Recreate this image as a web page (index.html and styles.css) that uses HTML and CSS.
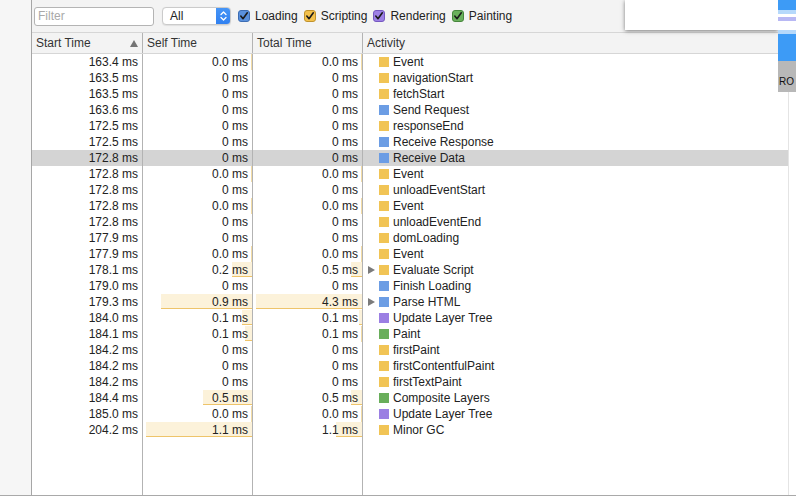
FILE: index.html
```html
<!DOCTYPE html>
<html>
<head>
<meta charset="utf-8">
<title>Timeline</title>
<link rel="stylesheet" href="styles.css">
</head>
<body>
<div class="app">
  <div class="gutter"></div>
  <div class="main">
    <div class="toolbar">
      <div class="filter">Filter</div>
      <div class="select">
        <span class="select-label">All</span>
        <span class="stepper"><svg width="15" height="18" viewBox="0 0 15 18"><path d="M5 7.5 L7.5 5 L10 7.5" fill="none" stroke="#fff" stroke-width="1.3" stroke-linecap="round" stroke-linejoin="round"/><path d="M5 10.5 L7.5 13 L10 10.5" fill="none" stroke="#fff" stroke-width="1.3" stroke-linecap="round" stroke-linejoin="round"/></svg></span>
      </div>
      <label class="cb cb-loading"><svg class="box" width="12" height="12" viewBox="0 0 12 12"><rect class="box-bg" x="0.5" y="0.5" width="11" height="11" rx="2.5"/><path d="M2.8 6.1 L5 8.7 L9.3 2.8" fill="none" stroke="#1b1b1b" stroke-width="1.6" stroke-linecap="round" stroke-linejoin="round"/></svg><span>Loading</span></label>
      <label class="cb cb-scripting"><svg class="box" width="12" height="12" viewBox="0 0 12 12"><rect class="box-bg" x="0.5" y="0.5" width="11" height="11" rx="2.5"/><path d="M2.8 6.1 L5 8.7 L9.3 2.8" fill="none" stroke="#1b1b1b" stroke-width="1.6" stroke-linecap="round" stroke-linejoin="round"/></svg><span>Scripting</span></label>
      <label class="cb cb-rendering"><svg class="box" width="12" height="12" viewBox="0 0 12 12"><rect class="box-bg" x="0.5" y="0.5" width="11" height="11" rx="2.5"/><path d="M2.8 6.1 L5 8.7 L9.3 2.8" fill="none" stroke="#1b1b1b" stroke-width="1.6" stroke-linecap="round" stroke-linejoin="round"/></svg><span>Rendering</span></label>
      <label class="cb cb-painting"><svg class="box" width="12" height="12" viewBox="0 0 12 12"><rect class="box-bg" x="0.5" y="0.5" width="11" height="11" rx="2.5"/><path d="M2.8 6.1 L5 8.7 L9.3 2.8" fill="none" stroke="#1b1b1b" stroke-width="1.6" stroke-linecap="round" stroke-linejoin="round"/></svg><span>Painting</span></label>
    </div>
    <div class="table">
      <div class="row head">
        <div class="cell sortable"><span>Start Time</span><svg class="sort" width="8" height="7" viewBox="0 0 8 7"><polygon points="4,0 8,7 0,7" fill="#747474"/></svg></div>
        <div class="cell">Self Time</div>
        <div class="cell">Total Time</div>
        <div class="cell act">Activity</div>
      </div>

      <div class="row"><div class="cell num">163.4 ms</div><div class="cell num"><i class="bar tiny"></i><span class="val">0.0 ms</span></div><div class="cell num"><i class="bar tiny"></i><span class="val">0.0 ms</span></div><div class="cell act"><span class="tri-space"></span><span class="sq yellow"></span>Event</div></div>
      <div class="row"><div class="cell num">163.5 ms</div><div class="cell num">0 ms</div><div class="cell num">0 ms</div><div class="cell act"><span class="tri-space"></span><span class="sq yellow"></span>navigationStart</div></div>
      <div class="row"><div class="cell num">163.5 ms</div><div class="cell num">0 ms</div><div class="cell num">0 ms</div><div class="cell act"><span class="tri-space"></span><span class="sq yellow"></span>fetchStart</div></div>
      <div class="row"><div class="cell num">163.6 ms</div><div class="cell num">0 ms</div><div class="cell num">0 ms</div><div class="cell act"><span class="tri-space"></span><span class="sq blue"></span>Send Request</div></div>
      <div class="row"><div class="cell num">172.5 ms</div><div class="cell num">0 ms</div><div class="cell num">0 ms</div><div class="cell act"><span class="tri-space"></span><span class="sq yellow"></span>responseEnd</div></div>
      <div class="row"><div class="cell num">172.5 ms</div><div class="cell num">0 ms</div><div class="cell num">0 ms</div><div class="cell act"><span class="tri-space"></span><span class="sq blue"></span>Receive Response</div></div>
      <div class="row sel"><div class="cell num">172.8 ms</div><div class="cell num">0 ms</div><div class="cell num">0 ms</div><div class="cell act"><span class="tri-space"></span><span class="sq blue"></span>Receive Data</div></div>
      <div class="row"><div class="cell num">172.8 ms</div><div class="cell num"><i class="bar tiny"></i><span class="val">0.0 ms</span></div><div class="cell num"><i class="bar tiny"></i><span class="val">0.0 ms</span></div><div class="cell act"><span class="tri-space"></span><span class="sq yellow"></span>Event</div></div>
      <div class="row"><div class="cell num">172.8 ms</div><div class="cell num">0 ms</div><div class="cell num">0 ms</div><div class="cell act"><span class="tri-space"></span><span class="sq yellow"></span>unloadEventStart</div></div>
      <div class="row"><div class="cell num">172.8 ms</div><div class="cell num"><i class="bar tiny"></i><span class="val">0.0 ms</span></div><div class="cell num"><i class="bar tiny"></i><span class="val">0.0 ms</span></div><div class="cell act"><span class="tri-space"></span><span class="sq yellow"></span>Event</div></div>
      <div class="row"><div class="cell num">172.8 ms</div><div class="cell num">0 ms</div><div class="cell num">0 ms</div><div class="cell act"><span class="tri-space"></span><span class="sq yellow"></span>unloadEventEnd</div></div>
      <div class="row"><div class="cell num">177.9 ms</div><div class="cell num">0 ms</div><div class="cell num">0 ms</div><div class="cell act"><span class="tri-space"></span><span class="sq yellow"></span>domLoading</div></div>
      <div class="row"><div class="cell num">177.9 ms</div><div class="cell num"><i class="bar tiny"></i><span class="val">0.0 ms</span></div><div class="cell num"><i class="bar tiny"></i><span class="val">0.0 ms</span></div><div class="cell act"><span class="tri-space"></span><span class="sq yellow"></span>Event</div></div>
      <div class="row"><div class="cell num">178.1 ms</div><div class="cell num"><i class="bar" style="width:20px"></i><span class="val">0.2 ms</span></div><div class="cell num"><i class="bar" style="width:11px"></i><span class="val">0.5 ms</span></div><div class="cell act"><svg class="tri" width="7" height="8" viewBox="0 0 7 8"><polygon points="0,0 7,4 0,8" fill="#7b7b7b"/></svg><span class="sq yellow"></span>Evaluate Script</div></div>
      <div class="row"><div class="cell num">179.0 ms</div><div class="cell num">0 ms</div><div class="cell num">0 ms</div><div class="cell act"><span class="tri-space"></span><span class="sq blue"></span>Finish Loading</div></div>
      <div class="row"><div class="cell num">179.3 ms</div><div class="cell num"><i class="bar" style="width:91px"></i><span class="val">0.9 ms</span></div><div class="cell num"><i class="bar" style="width:106px"></i><span class="val">4.3 ms</span></div><div class="cell act"><svg class="tri" width="7" height="8" viewBox="0 0 7 8"><polygon points="0,0 7,4 0,8" fill="#7b7b7b"/></svg><span class="sq blue"></span>Parse HTML</div></div>
      <div class="row"><div class="cell num">184.0 ms</div><div class="cell num"><i class="bar" style="width:10px"></i><span class="val">0.1 ms</span></div><div class="cell num"><i class="bar" style="width:3px"></i><span class="val">0.1 ms</span></div><div class="cell act"><span class="tri-space"></span><span class="sq purple"></span>Update Layer Tree</div></div>
      <div class="row"><div class="cell num">184.1 ms</div><div class="cell num"><i class="bar" style="width:7px"></i><span class="val">0.1 ms</span></div><div class="cell num"><i class="bar tiny"></i><span class="val">0.1 ms</span></div><div class="cell act"><span class="tri-space"></span><span class="sq green"></span>Paint</div></div>
      <div class="row"><div class="cell num">184.2 ms</div><div class="cell num">0 ms</div><div class="cell num">0 ms</div><div class="cell act"><span class="tri-space"></span><span class="sq yellow"></span>firstPaint</div></div>
      <div class="row"><div class="cell num">184.2 ms</div><div class="cell num">0 ms</div><div class="cell num">0 ms</div><div class="cell act"><span class="tri-space"></span><span class="sq yellow"></span>firstContentfulPaint</div></div>
      <div class="row"><div class="cell num">184.2 ms</div><div class="cell num">0 ms</div><div class="cell num">0 ms</div><div class="cell act"><span class="tri-space"></span><span class="sq yellow"></span>firstTextPaint</div></div>
      <div class="row"><div class="cell num">184.4 ms</div><div class="cell num"><i class="bar" style="width:49px"></i><span class="val">0.5 ms</span></div><div class="cell num"><i class="bar" style="width:11px"></i><span class="val">0.5 ms</span></div><div class="cell act"><span class="tri-space"></span><span class="sq green"></span>Composite Layers</div></div>
      <div class="row"><div class="cell num">185.0 ms</div><div class="cell num"><i class="bar tiny"></i><span class="val">0.0 ms</span></div><div class="cell num"><i class="bar tiny"></i><span class="val">0.0 ms</span></div><div class="cell act"><span class="tri-space"></span><span class="sq purple"></span>Update Layer Tree</div></div>
      <div class="row"><div class="cell num">204.2 ms</div><div class="cell num"><i class="bar" style="width:106px"></i><span class="val">1.1 ms</span></div><div class="cell num"><i class="bar" style="width:26px"></i><span class="val">1.1 ms</span></div><div class="cell act"><span class="tri-space"></span><span class="sq yellow"></span>Minor GC</div></div>

      <div class="row filler"><div class="cell"></div><div class="cell"></div><div class="cell"></div><div class="cell act"></div></div>
    </div>
  </div>
</div>

<div class="popup"></div>

<div class="ext">
  <div class="ext-blue-top"></div>
  <div class="ext-fade"></div>
  <div class="ext-white1"></div>
  <div class="ext-lav"></div>
  <div class="ext-white2"></div>
  <div class="ext-fade"></div>
  <div class="ext-blue"></div>
  <div class="ext-gray"><span>RO</span></div>
</div>
</body>
</html>
```

FILE: styles.css
```css
* { box-sizing: border-box; }

html, body {
  margin: 0;
  padding: 0;
  background: #fff;
}

body {
  width: 796px;
  height: 496px;
  overflow: hidden;
  position: relative;
  font-family: "Liberation Sans", Arial, sans-serif;
  font-size: 12px;
  color: #222;
}

.app {
  display: flex;
  height: 496px;
  border-bottom: 1px solid #a9a9a9;
}

.gutter {
  width: 32px;
  flex: none;
  background: #f6f6f6;
  border-right: 1px solid #a6a6a6;
}

.main {
  width: 757px;
  flex: none;
  display: flex;
  flex-direction: column;
  border-right: 1px solid #e4e4e4;
}

/* toolbar */
.toolbar {
  height: 33px;
  flex: none;
  display: flex;
  align-items: center;
  padding-left: 2px;
  background: #f3f3f3;
  border-bottom: 1px solid #d6d6d6;
}

.filter {
  width: 120px;
  height: 19px;
  border: 1px solid #b4b4b4;
  border-radius: 3px;
  background: #fff;
  padding-left: 3px;
  line-height: 17px;
  color: #a9a9a9;
}

.select {
  margin-left: 8px;
  width: 69px;
  height: 18px;
  display: flex;
  align-items: stretch;
  border: 1px solid #cbcbcb;
  border-radius: 4px;
  background: #fff;
  overflow: hidden;
  box-shadow: 0 0.5px 1px rgba(0,0,0,0.08);
}

.select-label {
  flex: 1;
  padding-left: 7px;
  line-height: 16px;
  color: #222;
}

.stepper {
  width: 15px;
  display: flex;
  align-items: center;
  justify-content: center;
  background: linear-gradient(#4796f7, #2f7ff0);
  margin: -1px -1px -1px 0;
}

.stepper svg { display: block; }

.cb {
  display: flex;
  align-items: center;
  gap: 5px;
  margin-left: 7px;
  color: #222;
}

.cb + .cb { margin-left: 6px; }

.box { display: block; flex: none; }

.cb-loading .box-bg { fill: #5a91dd; stroke: #3d6db3; }
.cb-scripting .box-bg { fill: #f3c14c; stroke: #c0922c; }
.cb-rendering .box-bg { fill: #9d80e5; stroke: #7558c0; }
.cb-painting .box-bg { fill: #6ab05c; stroke: #47863d; }

/* table */
.table {
  flex: 1;
  display: flex;
  flex-direction: column;
}

.row {
  display: grid;
  grid-template-columns: 111px 110px 110px 1fr;
  height: 16px;
  line-height: 16px;
  flex: none;
}

.row.sel { background: #d4d4d4; }

.row.head {
  height: 21px;
  line-height: 20px;
  background: #f3f3f3;
  border-bottom: 1px solid #d6d6d6;
  color: #333;
}

.row.filler {
  flex: 1;
  height: auto;
}

.cell {
  border-right: 1px solid #b3b3b3;
  white-space: nowrap;
  overflow: hidden;
  padding-left: 4px;
}

.cell.act {
  border-right: none;
  display: flex;
  align-items: center;
  padding-left: 5px;
}

.head .cell.act { padding-left: 4px; }

.sortable {
  display: flex;
  align-items: center;
  justify-content: space-between;
  padding-right: 4px;
}

.sort { display: block; margin-top: 1px; }

.num {
  position: relative;
  text-align: right;
  padding-right: 4px;
}

.val { position: relative; }

.bar {
  position: absolute;
  right: 0;
  top: 0;
  height: 15px;
  background: #fcf2da;
  border-bottom: 1px solid #eec46a;
}

.bar.tiny {
  width: 1px;
  height: 16px;
  background: #f3dca6;
  border-bottom: none;
}

.tri, .tri-space {
  width: 7px;
  height: 8px;
  flex: none;
  margin-right: 4px;
  display: block;
}

.sq {
  width: 10px;
  height: 10px;
  flex: none;
  margin-right: 4px;
}

.sq.yellow { background: #f1c455; }
.sq.blue { background: #6c9de4; }
.sq.purple { background: #9b7fe3; }
.sq.green { background: #69ae5b; }

/* overlays */
.popup {
  position: absolute;
  left: 625px;
  top: 0;
  width: 153px;
  height: 30px;
  background: #fff;
  box-shadow: 0 1px 4px rgba(0,0,0,0.5);
}

.ext {
  position: absolute;
  left: 778px;
  top: 0;
  width: 18px;
  height: 92px;
  display: flex;
  flex-direction: column;
  background: #fff;
}

.ext-blue-top { height: 10px; background: #3d9bf6; }
.ext-fade { height: 4px; background: #b6d9fb; }
.ext-white1 { height: 3px; }
.ext-lav { height: 4px; background: #b8b8f4; }
.ext-white2 { height: 9px; }
.ext-blue { height: 27px; background: #3d9bf6; }
.ext-gray {
  flex: 1;
  background: #b8b8b8;
  display: flex;
  align-items: flex-end;
  padding: 0 0 4px 1px;
  font-size: 10px;
  line-height: 12px;
  color: #111;
}
```
